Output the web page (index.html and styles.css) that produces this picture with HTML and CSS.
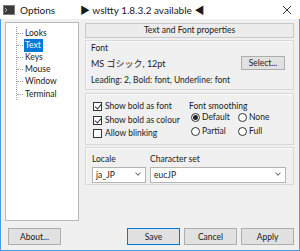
FILE: index.html
```html
<!DOCTYPE html>
<html lang="en">
<head>
    <meta charset="UTF-8">
    <title>Options</title>
    <link rel="stylesheet" href="styles.css">
</head>
<body>
    <div class="window">
        <div class="titlebar">
            <svg class="app-icon" width="12" height="10" viewBox="0 0 12 10">
                <rect x="0" y="0" width="12" height="10" fill="#3a3a3a"/>
                <rect x="0.5" y="0.5" width="11" height="9" fill="none" stroke="#7a7a7a"/>
                <path d="M2 3 L4 5 L2 7" fill="none" stroke="#d0d0d0" stroke-width="0.8"/>
            </svg>
            <span class="title">Options</span>
            <span class="notice">▶ wsltty 1.8.3.2 available ◀</span>
            <svg class="close" width="10" height="10" viewBox="0 0 10 10">
                <path d="M1 1 L9 9 M9 1 L1 9" stroke="#333" stroke-width="1"/>
            </svg>
        </div>

        <div class="client">
            <div class="tree">
                <ul>
                    <li><span>Looks</span></li>
                    <li class="selected"><span>Text</span></li>
                    <li><span>Keys</span></li>
                    <li><span>Mouse</span></li>
                    <li><span>Window</span></li>
                    <li class="last"><span>Terminal</span></li>
                </ul>
            </div>

            <div class="panel">
                <div class="heading">Text and Font properties</div>

                <div class="group font-group">
                    <div class="group-label">Font</div>
                    <div class="font-row">
                        <span class="font-name">MS ゴシック, 12pt</span>
                        <button class="btn select-btn">Select...</button>
                    </div>
                    <div class="font-info">Leading: 2, Bold: font, Underline: font</div>
                </div>

                <div class="group options-group">
                    <div class="checks">
                        <label class="check"><span class="box checked"></span>Show bold as font</label>
                        <label class="check"><span class="box checked"></span>Show bold as colour</label>
                        <label class="check"><span class="box"></span>Allow blinking</label>
                    </div>
                    <div class="smoothing">
                        <div class="group-label">Font smoothing</div>
                        <div class="radios">
                            <label class="radio"><span class="dot on"></span>Default</label>
                            <label class="radio"><span class="dot"></span>None</label>
                            <label class="radio"><span class="dot"></span>Partial</label>
                            <label class="radio"><span class="dot"></span>Full</label>
                        </div>
                    </div>
                </div>

                <div class="group locale-group">
                    <div class="field locale">
                        <div class="group-label">Locale</div>
                        <div class="combo">ja_JP<span class="chev"></span></div>
                    </div>
                    <div class="field charset">
                        <div class="group-label">Character set</div>
                        <div class="combo">eucJP<span class="chev"></span></div>
                    </div>
                </div>
            </div>

            <div class="footer">
                <button class="btn about">About...</button>
                <div class="actions">
                    <button class="btn default">Save</button>
                    <button class="btn">Cancel</button>
                    <button class="btn">Apply</button>
                </div>
            </div>
        </div>
    </div>
</body>
</html>
```

FILE: styles.css
```css
* {
    box-sizing: border-box;
}

body {
    margin: 0;
    font-family: Lato, "Noto Sans CJK JP", sans-serif;
    font-size: 8.5px;
    color: #1a1a1a;
    background: #fff;
}

.window {
    width: 300px;
    height: 251px;
    display: flex;
    flex-direction: column;
    background: #f0f0f0;
    border: 1px solid #4a9be0;
    border-top: none;
}

.titlebar {
    height: 19px;
    flex: none;
    display: flex;
    align-items: center;
    background: #fff;
    margin: 0 -1px;
    padding: 0 8px 0 3px;
    font-size: 10px;
}

.app-icon {
    margin-right: 5px;
}

.title {
    width: 60px;
}

.notice {
    flex: 1;
}

.close {
    flex: none;
}

.client {
    flex: 1;
    display: grid;
    grid-template-columns: 74px 1fr;
    grid-template-rows: 1fr 17px;
    column-gap: 6px;
    row-gap: 7px;
    padding: 3px 5px 5px 4px;
}

/* tree */
.tree {
    background: #fff;
    border: 1px solid #b9b9b9;
    padding: 4px 0 0 10px;
}

.tree ul {
    list-style: none;
    margin: 0;
    padding: 0;
    border-left: 1px dotted #a0a0a0;
}

.tree li {
    height: 12.2px;
    line-height: 11px;
    display: flex;
    align-items: center;
}

.tree li::before {
    content: "";
    width: 6px;
    border-top: 1px dotted #a0a0a0;
    margin-right: 1px;
}

.tree li span {
    padding: 0 1px;
}

.tree li.selected span {
    background: #0078d7;
    color: #fff;
    padding: 1px 2px 1px 1px;
}

/* right panel */
.panel {
    padding-top: 1px;
    display: flex;
    flex-direction: column;
}

.heading {
    height: 15px;
    line-height: 13px;
    text-align: center;
    background: #ececec;
    border: 1px solid #c9c9c9;
    margin-bottom: 2px;
}

.group {
    border: 1px solid #d9d9d9;
    box-shadow: inset 1px 1px 0 #fbfbfb;
}

.group-label {
    line-height: 11px;
}

.font-group {
    height: 50px;
    padding: 2px 8px 0 5px;
    margin-bottom: 3px;
}

.font-row {
    display: flex;
    justify-content: space-between;
    align-items: center;
    margin-top: 2px;
}

.font-name {
    font-size: 9px;
}

.font-info {
    margin-top: 5px;
    line-height: 11px;
}

.btn {
    font: inherit;
    color: #1a1a1a;
    background: #e1e1e1;
    border: 1px solid #adadad;
    padding: 0;
    height: 17px;
    width: 53px;
}

.select-btn {
    height: 14px;
    width: 44px;
}

.options-group {
    height: 52px;
    padding: 7px 4px 0 7px;
    margin-bottom: 2px;
    display: flex;
}

.checks {
    width: 96px;
    display: flex;
    flex-direction: column;
    gap: 2.5px;
}

.check, .radio {
    display: flex;
    align-items: center;
    line-height: 11px;
    white-space: nowrap;
}

.box {
    width: 9px;
    height: 9px;
    border: 1px solid #333;
    background: #fff;
    margin-right: 3px;
    position: relative;
    flex: none;
}

.box.checked::after {
    content: "";
    position: absolute;
    left: 2px;
    top: 0;
    width: 3px;
    height: 5px;
    border: solid #333;
    border-width: 0 1px 1px 0;
    transform: rotate(40deg);
}

.radios {
    display: grid;
    grid-template-columns: 47px auto;
    row-gap: 3px;
    padding-left: 2px;
}

.dot {
    width: 9px;
    height: 9px;
    border: 1px solid #333;
    border-radius: 50%;
    background: #fff;
    margin-right: 2px;
    display: flex;
    align-items: center;
    justify-content: center;
    flex: none;
}

.dot.on::after {
    content: "";
    width: 5px;
    height: 5px;
    border-radius: 50%;
    background: #222;
}

.locale-group {
    height: 38px;
    padding: 6px 7px 0 6px;
    display: flex;
    gap: 4px;
}

.locale {
    width: 54px;
}

.charset {
    flex: 1;
}

.combo {
    margin-top: 1.5px;
    height: 16px;
    background: #fff;
    border: 1px solid #b4b4b4;
    padding-left: 3px;
    display: flex;
    align-items: center;
    justify-content: space-between;
}

.chev {
    width: 4px;
    height: 4px;
    border: solid #777;
    border-width: 0 1px 1px 0;
    transform: rotate(45deg);
    margin: 0 5px 3px 0;
}

/* footer */
.footer {
    grid-column: 1 / 3;
    display: flex;
    justify-content: space-between;
    padding-left: 3px;
}

.actions {
    display: flex;
    gap: 4px;
}

.btn.default {
    border-color: #0078d7;
}
```
